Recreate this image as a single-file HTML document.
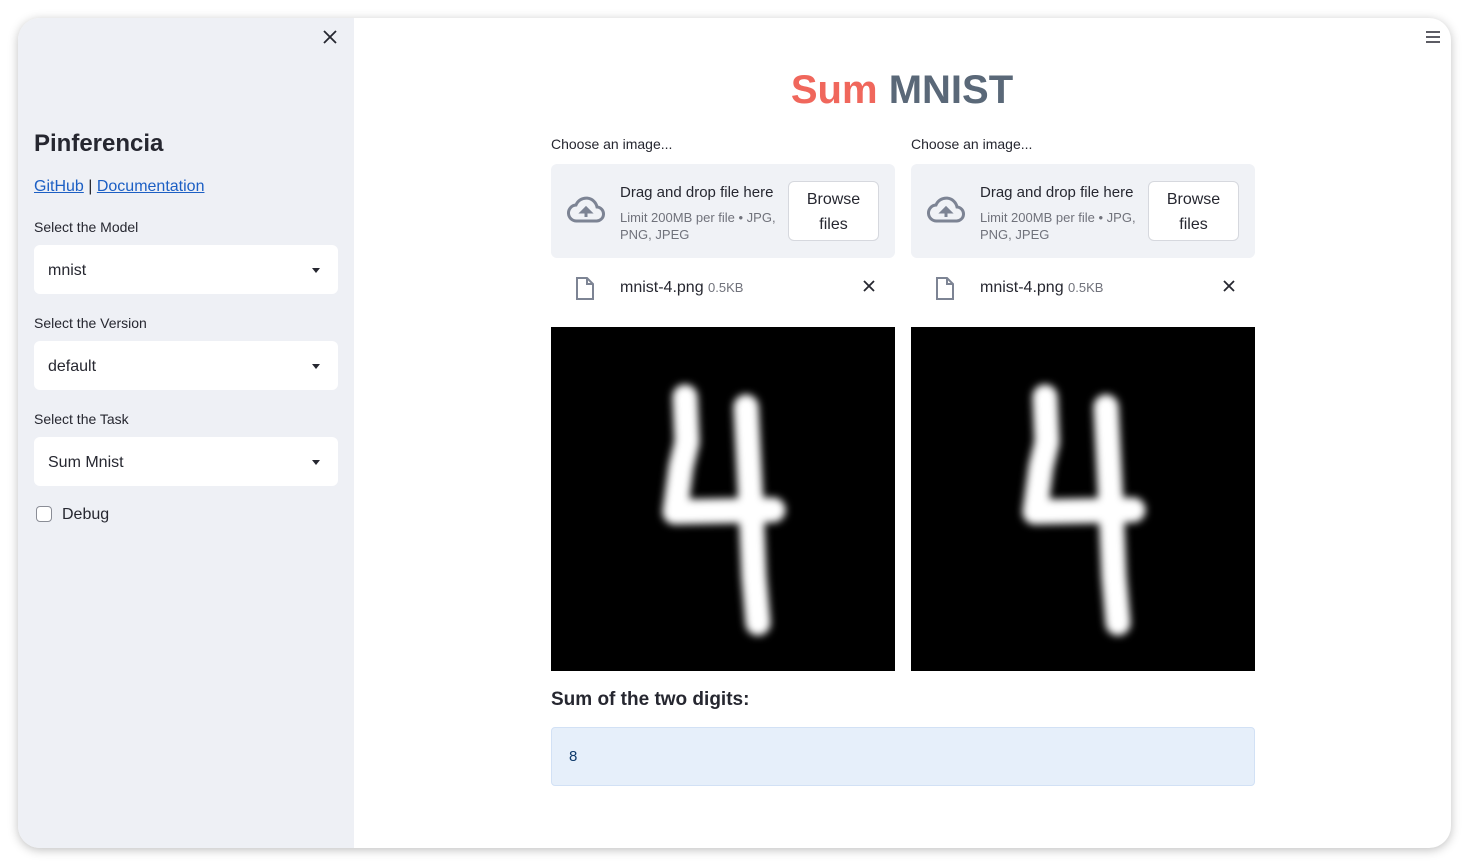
<!DOCTYPE html>
<html><head><meta charset="utf-8"><style>
*{box-sizing:border-box;margin:0;padding:0}
body{width:1469px;height:866px;background:#fff;font-family:"Liberation Sans",sans-serif;color:#262730;position:relative;overflow:hidden}
.win{position:absolute;left:18px;top:18px;width:1433px;height:830px;border-radius:22px;background:#fff;box-shadow:0 2px 10px rgba(0,0,0,.25);overflow:hidden}
.side{position:absolute;left:0;top:0;width:336px;height:830px;background:#eef0f5}
.abs{position:absolute}
.lbl{font-size:14px;color:#262730}
.sel{position:absolute;left:16px;width:304px;height:49px;background:#fff;border-radius:6px;font-size:16px;padding:17px 14px 0}
.sel:after{content:"";position:absolute;right:18px;top:23px;border:4px solid transparent;border-top:5px solid #262730}
.drop{position:absolute;width:344px;height:94px;background:#f0f2f6;border-radius:6px}
.btn{position:absolute;left:237px;top:17px;width:91px;height:60px;background:#fff;border:1px solid #d6d8de;border-radius:6px;font-size:16px;text-align:center;line-height:25px;padding-top:5px}
</style></head><body>
<div class="win">
 <div class="side">
  <svg class="abs" style="left:305px;top:12px" width="14" height="14" viewBox="0 0 14 14"><path d="M1 1L13 13M13 1L1 13" stroke="#262730" stroke-width="1.8"/></svg>
  <div class="abs" style="left:16px;top:112px;font-size:24px;font-weight:bold">Pinferencia</div>
  <div class="abs" style="left:16px;top:160px;font-size:16px;color:#262730"><u style="color:#1c5fc4">GitHub</u> | <u style="color:#1c5fc4">Documentation</u></div>
  <div class="abs lbl" style="left:16px;top:201px">Select the Model</div>
  <div class="sel" style="top:227px">mnist</div>
  <div class="abs lbl" style="left:16px;top:297px">Select the Version</div>
  <div class="sel" style="top:323px">default</div>
  <div class="abs lbl" style="left:16px;top:393px">Select the Task</div>
  <div class="sel" style="top:419px">Sum Mnist</div>
  <div class="abs" style="left:18px;top:488px;width:16px;height:16px;border:1.5px solid #8a8d96;border-radius:4px;background:#fff"></div>
  <div class="abs" style="left:44px;top:488px;font-size:16px">Debug</div>
 </div>
 <svg class="abs" style="left:1407px;top:12px" width="16" height="14" viewBox="0 0 16 14"><path d="M1 2H15M1 7H15M1 12H15" stroke="#262730" stroke-width="1.6"/></svg>
 <div class="abs" style="left:530px;width:708px;top:50px;text-align:center;font-size:40px;font-weight:bold"><span style="color:#f0675c">Sum</span> <span style="color:#5a6878">MNIST</span></div>

 <div class="abs lbl" style="left:533px;top:118px">Choose an image...</div>
 <div class="abs lbl" style="left:893px;top:118px">Choose an image...</div>

 <div class="drop" style="left:533px;top:146px">
  <svg class="abs" style="left:16px;top:32px" width="38" height="28" viewBox="0 0 38 28"><path d="M10 25H29a7 7 0 0 0 1-14A11 11 0 0 0 9 9 8 8 0 0 0 10 25z" fill="none" stroke="#7d8494" stroke-width="3"/><path d="M19 21V13M15 16l4-4 4 4z" stroke="#7d8494" stroke-width="3" fill="#7d8494"/></svg>
  <div class="abs" style="left:69px;top:20px;font-size:15px">Drag and drop file here</div>
  <div class="abs" style="left:69px;top:45px;font-size:13px;color:#70727b;line-height:17px;width:165px">Limit 200MB per file • JPG, PNG, JPEG</div>
  <div class="btn">Browse<br>files</div>
 </div>
 <div class="drop" style="left:893px;top:146px">
  <svg class="abs" style="left:16px;top:32px" width="38" height="28" viewBox="0 0 38 28"><path d="M10 25H29a7 7 0 0 0 1-14A11 11 0 0 0 9 9 8 8 0 0 0 10 25z" fill="none" stroke="#7d8494" stroke-width="3"/><path d="M19 21V13M15 16l4-4 4 4z" stroke="#7d8494" stroke-width="3" fill="#7d8494"/></svg>
  <div class="abs" style="left:69px;top:20px;font-size:15px">Drag and drop file here</div>
  <div class="abs" style="left:69px;top:45px;font-size:13px;color:#70727b;line-height:17px;width:165px">Limit 200MB per file • JPG, PNG, JPEG</div>
  <div class="btn">Browse<br>files</div>
 </div>

 <svg class="abs" style="left:557px;top:258px" width="20" height="25" viewBox="0 0 20 25"><path d="M2 2H12L18 8V23H2Z M12 2V8H18" fill="none" stroke="#7d8494" stroke-width="2"/></svg>
 <div class="abs" style="left:602px;top:261px;font-size:16px">mnist-4.png <span style="font-size:13px;color:#70727b">0.5KB</span></div>
 <svg class="abs" style="left:845px;top:262px" width="12" height="12" viewBox="0 0 12 12"><path d="M1 1L11 11M11 1L1 11" stroke="#262730" stroke-width="1.8"/></svg>
 <svg class="abs" style="left:917px;top:258px" width="20" height="25" viewBox="0 0 20 25"><path d="M2 2H12L18 8V23H2Z M12 2V8H18" fill="none" stroke="#7d8494" stroke-width="2"/></svg>
 <div class="abs" style="left:962px;top:261px;font-size:16px">mnist-4.png <span style="font-size:13px;color:#70727b">0.5KB</span></div>
 <svg class="abs" style="left:1205px;top:262px" width="12" height="12" viewBox="0 0 12 12"><path d="M1 1L11 11M11 1L1 11" stroke="#262730" stroke-width="1.8"/></svg>

 <svg class="abs" style="left:533px;top:309px" width="344" height="344" viewBox="0 0 344 344"><defs><filter id="b" filterUnits="userSpaceOnUse" x="0" y="0" width="344" height="344"><feGaussianBlur stdDeviation="4"/></filter></defs><rect width="344" height="344" fill="#000"/><g filter="url(#b)" stroke="#fff" stroke-width="25" fill="none" stroke-linecap="round" stroke-linejoin="round"><path d="M134 70L136 115 130 140 124 185 222 183"/><path d="M195 80L200 180 203 250 207 296"/></g></svg>
 <svg class="abs" style="left:893px;top:309px" width="344" height="344" viewBox="0 0 344 344"><rect width="344" height="344" fill="#000"/><g filter="url(#b)" stroke="#fff" stroke-width="25" fill="none" stroke-linecap="round" stroke-linejoin="round"><path d="M134 70L136 115 130 140 124 185 222 183"/><path d="M195 80L200 180 203 250 207 296"/></g></svg>

 <div class="abs" style="left:533px;top:671px;font-size:19px;font-weight:bold">Sum of the two digits:</div>
 <div class="abs" style="left:533px;top:709px;width:704px;height:59px;background:#e6effa;border:1px solid #d2e1f5;border-radius:4px;padding:20px 20px 0 17px;font-size:15px;color:#0e3a6b">8</div>
</div>
</body></html>
